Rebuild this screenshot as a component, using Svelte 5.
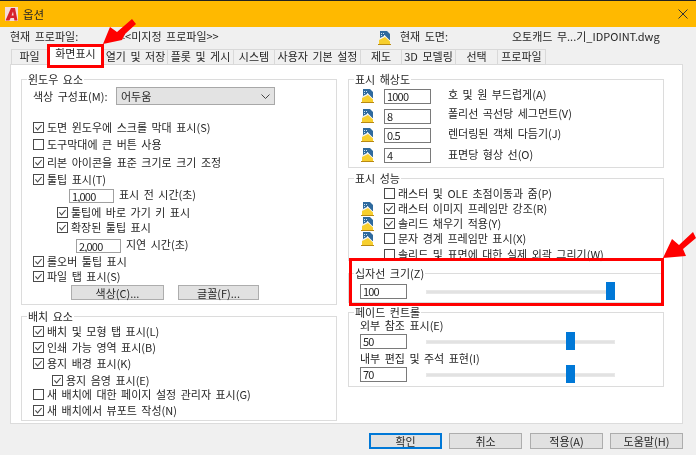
<script>
  const tabs = [
    { t: '파일', w: 37 }, { t: '화면표시', w: 56, sel: true }, { t: '열기 및 저장', w: 64 },
    { t: '플롯 및 게시', w: 66 }, { t: '시스템', w: 41 }, { t: '사용자 기본 설정', w: 86 },
    { t: '제도', w: 41 }, { t: '3D 모델링', w: 54 }, { t: '선택', w: 42 }, { t: '프로파일', w: 48 }
  ];
  const win = [
    { k: 'c', t: '도면 윈도우에 스크롤 막대 표시(S)', on: true, mt: 15 },
    { k: 'c', t: '도구막대에 큰 버튼 사용', on: false, mt: 2 },
    { k: 'c', t: '리본 아이콘을 표준 크기로 크기 조정', on: true, mt: 3 },
    { k: 'c', t: '툴팁 표시(T)', on: true, mt: 2 },
    { k: 'i', v: '1,000', t: '표시 전 시간(초)', x: 36, mt: 2 },
    { k: 'c', t: '툴팁에 바로 가기 키 표시', on: true, x: 24, mt: 2 },
    { k: 'c', t: '확장된 툴팁 표시', on: true, x: 24, mt: 0 },
    { k: 'i', v: '2,000', t: '지연 시간(초)', x: 43, mt: 4 },
    { k: 'c', t: '롤오버 툴팁 표시', on: true, mt: 1 },
    { k: 'c', t: '파일 탭 표시(S)', on: true, mt: 0 }
  ];
  const layout = [
    { t: '배치 및 모형 탭 표시(L)', on: true, mt: 1 },
    { t: '인쇄 가능 영역 표시(B)', on: true, mt: 1 },
    { t: '용지 배경 표시(K)', on: true, mt: 1 },
    { t: '용지 음영 표시(E)', on: true, x: 19, mt: 2 },
    { t: '새 배치에 대한 페이지 설정 관리자 표시(G)', on: false, mt: -1 },
    { t: '새 배치에서 뷰포트 작성(N)', on: true, mt: 1 }
  ];
  const res = [
    { v: '1000', t: '호 및 원 부드럽게(A)', mt: 3, lift: -2 },
    { v: '8', t: '폴리선 곡선당 세그먼트(V)', mt: 5, lift: -3 },
    { v: '0.5', t: '렌더링된 객체 다듬기(J)', mt: 4, lift: -2 },
    { v: '4', t: '표면당 형상 선(O)', mt: 5, lift: -1 }
  ];
  const perf = [
    { t: '래스터 및 OLE 초점이동과 줌(P)', on: false, icon: false, mt: 1 },
    { t: '래스터 이미지 프레임만 강조(R)', on: true, icon: true, mt: 0 },
    { t: '솔리드 채우기 적용(Y)', on: true, icon: true, mt: 0 },
    { t: '문자 경계 프레임만 표시(X)', on: false, icon: true, mt: 0 },
    { t: '솔리드 및 표면에 대한 실제 외곽 그리기(W)', on: false, icon: false, mt: 1 }
  ];
  const footer = ['확인', '취소', '적용(A)', '도움말(H)'];
</script>

{#snippet drawingIcon()}
  <svg class="dicon" viewBox="0 0 13 14" aria-hidden="true">
    <path d="M2 0h7l3 3v6L2 9z" fill="#2f6a9e" />
    <path d="M3 2h1v1H3zM5 2h1v1H5zM3 4h1v1H3zM6 4h1v1H6z" fill="#cfe3f2" />
    <path d="M1 8l6-3 5 5v3H1z" fill="#f7cf2e" />
    <path d="M1 7.5L7 4.5l5 5v1L7 6 1 9z" fill="#f4f4f4" />
    <path d="M0 13h13v1H0z" fill="#b98a12" />
  </svg>
{/snippet}

{#snippet box(on)}
  <svg class="cb" viewBox="0 0 11 11" aria-hidden="true">
    <rect x="0.5" y="0.5" width="10" height="10" fill="#fff" stroke="#4a4a4a" />
    {#if on}<path d="M2.4 5.4l2.2 2.4 4-4.8" fill="none" stroke="#4a4a4a" stroke-width="1.1" />{/if}
  </svg>
{/snippet}

{#snippet check(r)}
  <div class="check" style:margin-top="{r.mt}px" style:padding-left="{r.x ?? 0}px">
    {@render box(r.on)}<span>{r.t}</span>
  </div>
{/snippet}

{#snippet slider(v, pos)}
  <div class="srow">
    <input class="field wide" value={v} readonly />
    <div class="track"><i class="thumb" style:left="{pos}px"></i></div>
  </div>
{/snippet}

<div class="window">
  <header class="title">
    <svg class="logo" viewBox="0 0 13 14" aria-hidden="true">
      <rect width="13" height="14" fill="#f3dcdc" />
      <path d="M0.5 13.5L6 1h4l2.5 12.5H9.4L9 11H5.6L4.4 13.5zM6.6 8.6h2L8 4.5z" fill="#d8222b" />
    </svg>
    <span>옵션</span>
    <svg class="close" viewBox="0 0 10 10" aria-hidden="true"><path d="M0.5 0.5l9 9M9.5 0.5l-9 9" stroke="#333" fill="none" /></svg>
  </header>

  <div class="profile">
    <span class="p1">현재 프로파일:</span>
    <span class="p2">&lt;&lt;미지정 프로파일&gt;&gt;</span>
    <span class="picon">{@render drawingIcon()}</span>
    <span class="p3">현재 도면:</span>
    <span class="p4">오토캐드 무...기_IDPOINT.dwg</span>
  </div>

  <nav class="tabs">
    {#each tabs as tab}
      <div class="tab" class:sel={tab.sel} style:width="{tab.w}px">{tab.t}</div>
    {/each}
  </nav>

  <main class="panel">
    <div class="col">
      <fieldset class="g-win">
        <legend>윈도우 요소</legend>
        <div class="combo-row">
          <span>색상 구성표(M):</span>
          <div class="combo">어두움
            <svg viewBox="0 0 9 5" aria-hidden="true"><path d="M0.5 0.5l4 4 4-4" fill="none" stroke="#444" /></svg>
          </div>
        </div>
        {#each win as r}
          {#if r.k === 'c'}
            {@render check(r)}
          {:else}
            <div class="timer" style:margin-top="{r.mt}px" style:padding-left="{r.x}px">
              <input class="field small" value={r.v} readonly />
              <span>{r.t}</span>
            </div>
          {/if}
        {/each}
        <div class="btns">
          <button class="b1">색상(C)...</button>
          <button class="b2">글꼴(F)...</button>
        </div>
      </fieldset>

      <fieldset class="g-layout">
        <legend>배치 요소</legend>
        {#each layout as r}{@render check(r)}{/each}
      </fieldset>
    </div>

    <div class="col">
      <fieldset class="g-res">
        <legend>표시 해상도</legend>
        {#each res as r}
          <div class="res" style:margin-top="{r.mt}px">
            {@render drawingIcon()}
            <input class="field wide" value={r.v} readonly />
            <span style:margin-top="{r.lift}px">{r.t}</span>
          </div>
        {/each}
      </fieldset>

      <fieldset class="g-perf">
        <legend>표시 성능</legend>
        {#each perf as r}
          <div class="perf" style:margin-top="{r.mt}px">
            <span class="slot">{#if r.icon}{@render drawingIcon()}{/if}</span>
            {@render box(r.on)}<span>{r.t}</span>
          </div>
        {/each}
      </fieldset>

      <fieldset class="g-cross">
        <legend>십자선 크기(Z)</legend>
        {@render slider('100', 179)}
      </fieldset>

      <fieldset class="g-fade">
        <legend>페이드 컨트롤</legend>
        <div class="flabel first">외부 참조 표시(E)</div>
        {@render slider('50', 139)}
        <div class="flabel">내부 편집 및 주석 표현(I)</div>
        {@render slider('70', 139)}
      </fieldset>
    </div>
  </main>

  <footer class="foot">
    {#each footer as f, i}
      <button class:default={i === 0}>{f}</button>
    {/each}
  </footer>

  <div class="mark tabmark"></div>
  <div class="mark crossmark"></div>
  <svg class="arrows" viewBox="0 0 696 455" aria-hidden="true">
    <path d="M103 44L110 27L117 32L132 19L136 24L125 34L122 40z" fill="#f00" />
    <path d="M663 258L672 239L679 245L693 232L696 238L683 249L686 256z" fill="#f00" />
  </svg>
</div>

<style>
  :global(body) { margin: 0; background: #f0f0f0; }
  * { box-sizing: border-box; }
  .window {
    position: relative; width: 696px; height: 455px; overflow: hidden;
    background: #f0f0f0; border-top: 1px solid #222; color: #262626;
    font: 11px/15px "Noto Sans CJK KR", "Noto Sans", sans-serif; word-spacing: 2px;
    display: flex; flex-direction: column; filter: blur(0.3px);
  }
  .title {
    height: 26px; flex: none; background: #ffb900; display: flex; align-items: center;
    padding: 0 8px 0 5px; font-size: 11.500px;
  }
  .logo { width: 13px; height: 14px; margin-right: 5px; }
  .close { width: 10px; height: 10px; margin-left: auto; }
  .profile { height: 22px; flex: none; position: relative; display: flex; align-items: center; padding-left: 10px; }
  .p1 { width: 109px; margin-top: -3px; }
  .p2 { width: 259px; margin-top: -3px; }
  .picon { width: 22px; display: flex; margin-left: 0; }
  .p3 { width: 112px; margin-top: -3px; }
  .p4 { margin-top: -3px; }
  .tabs { height: 15px; flex: none; display: flex; align-items: flex-end; padding-left: 11px; position: relative; z-index: 1; }
  .tab {
    height: 16px; margin-bottom: -1px; text-align: center; line-height: 13px;
    border: 1px solid #d9d9d9; border-left-width: 0; background: #f0f0f0; white-space: nowrap; overflow: hidden;
  }
  .tab:first-child { border-left-width: 1px; }
  .tab.sel { height: 19px; background: #fff; border-bottom: 0; }
  .panel {
    width: 673px; height: 360px; margin-left: 10px; flex: none; background: #fff; border: 1px solid #dcdcdc;
    padding: 7px 0 0 10px; display: grid; grid-template-columns: 316px 316px; column-gap: 11px; align-content: start;
  }
  .col { display: flex; flex-direction: column; }
  fieldset { margin: 0; padding: 0; border: 1px solid #dcdcdc; min-width: 0; }
  legend { margin-left: -6px; padding: 0 1px; line-height: 14px; }
  .g-win { height: 233px; padding-left: 11px; }
  .g-layout { height: 112px; margin-top: 4px; padding-left: 11px; }
  .g-res { height: 96px; padding-left: 12px; }
  .g-perf { height: 90px; margin-top: 3px; padding-left: 12px; }
  .g-res legend, .g-perf legend { margin-left: -7px; }
  .g-cross { height: 37px; margin-top: 5px; padding-left: 11px; }
  .g-fade { height: 82px; margin-top: 2px; padding-left: 11px; }
  .combo-row { display: flex; align-items: center; height: 18px; margin-top: 1px; }
  .combo-row > span { width: 83px; }
  .combo {
    width: 159px; height: 18px; background: #e3e3e3; border: 1px solid #a8a8a8; padding-left: 4px;
    display: flex; align-items: center; justify-content: space-between; padding-right: 4px;
  }
  .combo svg { width: 9px; height: 5px; }
  .check { display: flex; align-items: center; height: 15px; white-space: nowrap; }
  .cb { width: 11px; height: 11px; flex: none; margin-right: 3px; }
  .timer { display: flex; height: 14px; align-items: center; }
  .timer span { margin-left: 5px; margin-top: -3px; }
  .field {
    border: 1px solid #7a7a7a; background: #fff; padding: 0 0 0 2px; color: #262626;
    font: inherit; letter-spacing: -0.8px; outline: none; display: block; flex: none;
  }
  .field.small { width: 45px; height: 14px; border-color: #a0a0a0; }
  .field.wide { width: 47px; height: 15px; }
  .btns { display: flex; margin-top: 1px; padding-left: 38px; }
  button {
    height: 15px; padding: 0; background: #e1e1e1; border: 1px solid #adadad; color: #262626;
    font: inherit; line-height: 12px;
  }
  .b1 { width: 93px; }
  .b2 { width: 81px; margin-left: 14px; }
  .res { display: flex; align-items: flex-start; height: 15px; }
  .dicon { width: 13px; height: 14px; flex: none; display: block; }
  .res .field { margin-left: 10px; }
  .res span { margin-left: 17px; white-space: nowrap; }
  .perf { display: flex; align-items: center; height: 15px; white-space: nowrap; }
  .slot { width: 23px; flex: none; display: flex; }
  .srow { display: flex; align-items: center; height: 15px; margin-top: 4px; position: relative; }
  .track { width: 189px; height: 4px; margin-left: 19px; background: #e2e2e2; border: 1px solid #e8e8e8; position: relative; }
  .thumb { position: absolute; top: -9px; width: 9px; height: 18px; background: #0078d7; }
  .g-fade .srow { margin-top: 1px; }
  .flabel { height: 15px; margin-top: 2px; }
  .flabel.first { margin-top: -1px; }
  .foot { display: flex; margin-top: 9px; padding-left: 369px; height: 16px; flex: none; }
  .foot button { width: 73px; height: 16px; margin-right: 7px; }
  .foot button:nth-child(2) { margin-right: 8px; }
  .foot button.default { border: 1px solid #0078d7; box-shadow: inset 0 0 0 1px #0078d7; }
  .mark { position: absolute; border: 3px solid #f00; pointer-events: none; }
  .tabmark { left: 47px; top: 43px; width: 57px; height: 24px; z-index: 2; }
  .crossmark { left: 349px; top: 257px; width: 315px; height: 48px; z-index: 2; }
  .arrows { position: absolute; left: 0; top: -1px; width: 696px; height: 455px; z-index: 3; pointer-events: none; }
</style>
